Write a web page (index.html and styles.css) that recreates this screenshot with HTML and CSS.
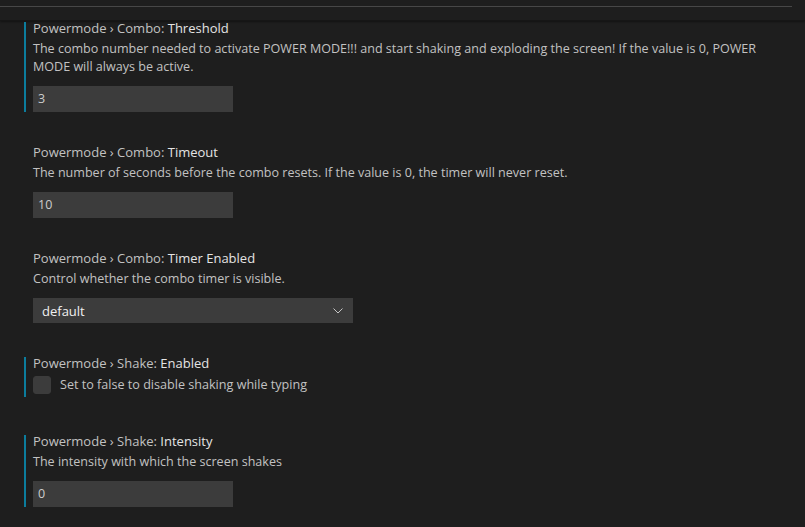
FILE: index.html
```html
<!DOCTYPE html>
<html>
<head>
<meta charset="utf-8">
<link rel="stylesheet" href="styles.css">
</head>
<body>
<div class="editor">
  <div class="header"><div class="header-line"></div></div>
  <div class="list">
    <div class="item item-first">
      <div class="content modified">
        <div class="title"><span class="cat">Powermode › Combo: </span><span class="label">Threshold</span></div>
        <div class="desc">The combo number needed to activate POWER MODE!!! and start shaking and exploding the screen! If the value is 0, POWER MODE will always be active.</div>
        <div class="input">3</div>
      </div>
    </div>
    <div class="item">
      <div class="content">
        <div class="title"><span class="cat">Powermode › Combo: </span><span class="label">Timeout</span></div>
        <div class="desc">The number of seconds before the combo resets. If the value is 0, the timer will never reset.</div>
        <div class="input">10</div>
      </div>
    </div>
    <div class="item">
      <div class="content">
        <div class="title"><span class="cat">Powermode › Combo: </span><span class="label">Timer Enabled</span></div>
        <div class="desc">Control whether the combo timer is visible.</div>
        <div class="select"><span>default</span><svg class="chev" width="10" height="6" viewBox="0 0 10 6"><path d="M0.5 0.5 L5 5 L9.5 0.5" fill="none" stroke="#c5c5c5" stroke-width="1"/></svg></div>
      </div>
    </div>
    <div class="item item-check">
      <div class="content modified">
        <div class="title"><span class="cat">Powermode › Shake: </span><span class="label">Enabled</span></div>
        <div class="check-row"><span class="checkbox"></span><span class="check-text">Set to false to disable shaking while typing</span></div>
      </div>
    </div>
    <div class="item">
      <div class="content modified">
        <div class="title"><span class="cat">Powermode › Shake: </span><span class="label">Intensity</span></div>
        <div class="desc">The intensity with which the screen shakes</div>
        <div class="input">0</div>
      </div>
    </div>
  </div>
</div>
</body>
</html>
```
FILE: styles.css
```css
html, body {
  margin: 0;
  padding: 0;
  background: #1e1e1e;
  height: 100%;
  overflow: hidden;
}
body {
  font-family: "Open Sans", "Noto Sans", sans-serif;
  font-size: 13px;
  color: #cccccc;
}
.editor {
  width: 805px;
  height: 527px;
  overflow: hidden;
}
.header {
  height: 21px;
  padding-top: 6px;
  box-sizing: border-box;
  border-bottom: 1px solid #161616;
  box-shadow: 0 1px 2px rgba(0,0,0,0.4);
}
.header-line {
  width: 792px;
  height: 1px;
  background: #474747;
}
.list {
  display: flex;
  flex-direction: column;
  gap: 34px;
}
.item {
  padding-left: 24px;
}
.item-first {
  margin-top: 1px;
}
.content {
  border-left: 2px solid transparent;
  padding-left: 7px;
  width: 760px;
}
.content.modified {
  border-left-color: #0c7d9d;
}
.title {
  line-height: 12px;
  white-space: nowrap;
}
.cat {
  color: #c2c2c2;
}
.label {
  color: #e4e4e4;
}
.desc {
  margin-top: 6px;
  line-height: 18px;
  font-size: 12.55px;
  color: #c2c2c2;
}
.input {
  margin-top: 10px;
  width: 200px;
  height: 26px;
  box-sizing: border-box;
  background: #3c3c3c;
  color: #cccccc;
  padding-left: 5px;
  line-height: 26px;
  font-size: 12.5px;
}
.select {
  margin-top: 10px;
  width: 320px;
  height: 25px;
  box-sizing: border-box;
  background: #3c3c3c;
  color: #f0f0f0;
  padding: 0 10px 0 9px;
  display: flex;
  align-items: center;
  justify-content: space-between;
}
.chev {
  display: block;
}
.item-check {
  margin-bottom: 4px;
}
.check-row {
  margin-top: 7px;
  padding-bottom: 3px;
  display: flex;
  align-items: center;
  gap: 9px;
}
.checkbox {
  width: 18px;
  height: 18px;
  box-sizing: border-box;
  border-radius: 3px;
  background: #3c3c3c;
  border: 1px solid #3c3c3c;
}
.check-text {
  line-height: 18px;
  font-size: 12.6px;
  color: #c2c2c2;
}
```
